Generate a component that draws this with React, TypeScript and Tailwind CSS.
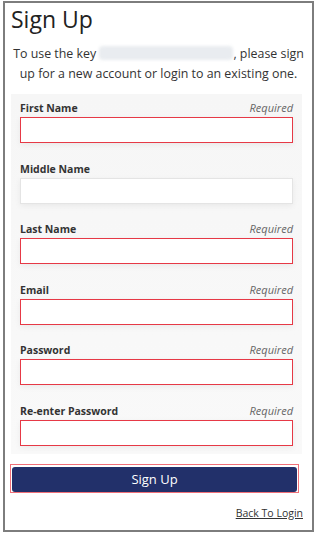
const fields = [
  { label: "First Name", required: true },
  { label: "Middle Name", required: false },
  { label: "Last Name", required: true },
  { label: "Email", required: true },
  { label: "Password", required: true },
  { label: "Re-enter Password", required: true },
];

export default function App() {
  return (
    <div className="w-[317px] h-[536px] bg-white pt-px pl-[3px] font-['Open_Sans',sans-serif] text-[#333]">
      <div className="w-[311px] h-[531px] border-2 border-[#7d7d7d] bg-white flex flex-col">
        <h1 className="pl-[6px] pt-[1px] text-[23px] leading-[30px] text-[#222]">Sign Up</h1>
        <p className="mt-[10px] px-0 text-center text-[12.4px] leading-[20px] text-[#333] whitespace-nowrap">
          To use the key{" "}
          <span className="inline-block w-[134px] h-[14px] align-[-2px] bg-[#e9ecf0] blur-[1.5px] rounded-sm"></span>
          , please sign
          <br />
          up for a new account or login to an existing one.
        </p>

        <div className="mt-[10px] ml-[6px] w-[291px] bg-gradient-to-b from-[#f6f6f6] to-[#f9f9f9] px-[9px] pt-[4px] pb-[8px] flex flex-col gap-[15.5px]">
          {fields.map((f) => (
            <div key={f.label} className="flex flex-col">
              <div className="flex items-end justify-between h-[17px] mb-[2px]">
                <span className="text-[10.5px] font-bold text-[#333] leading-[14px]">{f.label}</span>
                {f.required && (
                  <span className="text-[11px] italic text-[#666] leading-[14px]">Required</span>
                )}
              </div>
              <div
                className={
                  f.required
                    ? "h-[26px] bg-white border border-[#e63946] shadow-[0_2px_6px_rgba(0,0,0,0.06)]"
                    : "h-[26px] bg-white border border-[#e4e4e4] shadow-[0_2px_6px_rgba(0,0,0,0.06)]"
                }
              ></div>
            </div>
          ))}
        </div>

        <div className="mt-[10px] ml-[5px] w-[289px] h-[29px] border border-[#f07078] p-px">
          <button className="w-full h-full rounded-[3px] bg-[#22306a] text-white text-[13px] leading-none">
            Sign Up
          </button>
        </div>

        <div className="mt-[13px] pr-[9px] flex justify-end">
          <a className="text-[10.5px] underline text-[#333] cursor-pointer">Back To Login</a>
        </div>
      </div>
    </div>
  );
}
